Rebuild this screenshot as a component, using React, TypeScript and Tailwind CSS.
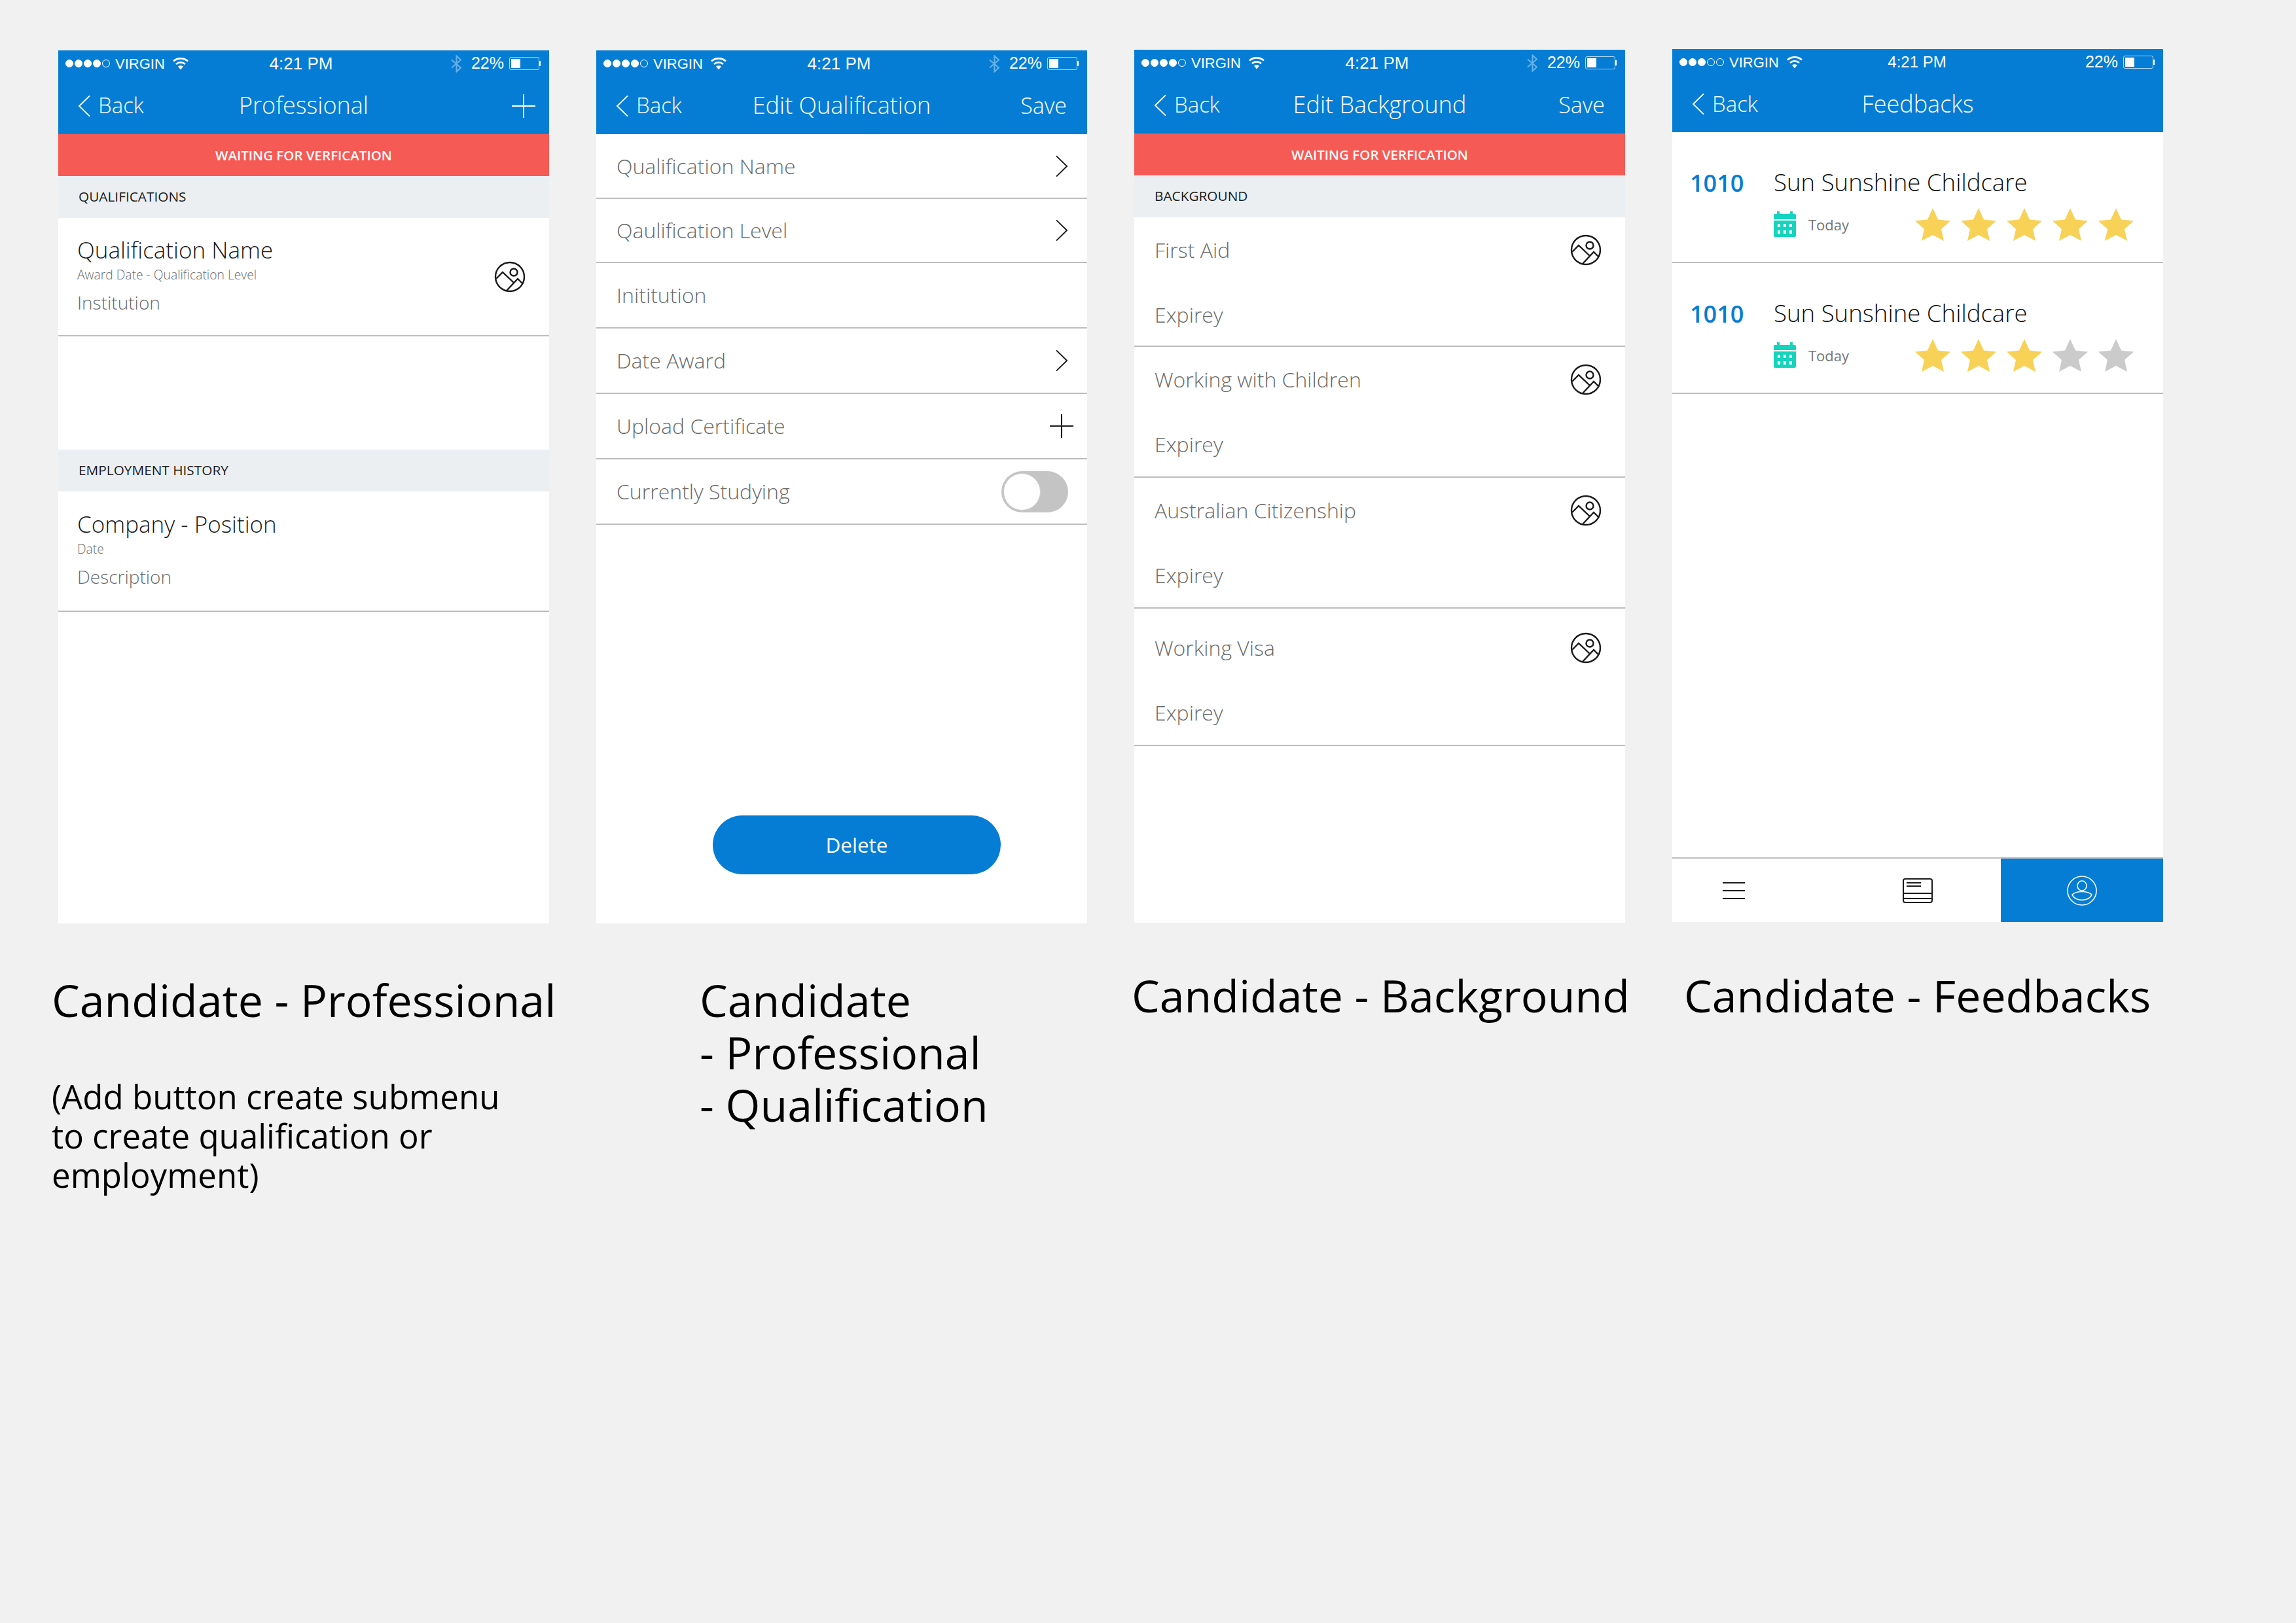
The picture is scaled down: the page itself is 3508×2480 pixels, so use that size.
import type { ReactNode } from "react";

const sans = "font-['Open_Sans',sans-serif]";

function Dots({ filled }: { filled: number }) {
  return (
    <div className="flex gap-[2px]">
      {[0, 1, 2, 3, 4].map((i) => (
        <span
          key={i}
          className={i < filled ? "h-[12px] w-[12px] rounded-full border border-white bg-white" : "h-[12px] w-[12px] rounded-full border border-white"}
        />
      ))}
    </div>
  );
}

function Wifi() {
  return (
    <svg width="24" height="20" viewBox="0 0 24 20" fill="none" stroke="white" strokeWidth="2.6">
      <path d="M1 6.5C7 1 17 1 23 6.5" />
      <path d="M5 11C9 7.5 15 7.5 19 11" />
      <path d="M12 19.5L8 14.5C10.5 12.8 13.5 12.8 16 14.5Z" fill="white" stroke="none" />
    </svg>
  );
}

function Bluetooth() {
  return (
    <svg width="17" height="27" viewBox="0 0 17 27" fill="none" stroke="white" strokeOpacity="0.4" strokeWidth="2">
      <path d="M1 7.5L15 19.5L8.5 25.5V1.5L15 7.5L1 19.5" />
    </svg>
  );
}

function Battery() {
  return (
    <div className="flex items-center">
      <div className="h-[20px] w-[46px] rounded-[3px] border border-white/70 p-[2px]">
        <div className="h-full w-[14px] bg-white" />
      </div>
      <div className="h-[8px] w-[2px] bg-white" />
    </div>
  );
}

function StatusBar({ filled = 4, bluetooth = true }: { filled?: number; bluetooth?: boolean }) {
  return (
    <div className="grid h-[40px] grid-cols-[1fr_auto_1fr] items-center pl-[11px] pr-[13px] font-['Liberation_Sans',sans-serif] text-[22px] text-white">
      <div className="flex items-center">
        <Dots filled={filled} />
        <span className="ml-[8px]">VIRGIN</span>
        <span className="ml-[12px] flex">
          <Wifi />
        </span>
      </div>
      <span className={bluetooth ? "-ml-[6px] text-[26px]" : "text-[24px]"}>4:21 PM</span>
      <div className="flex items-center justify-end">
        {bluetooth && <Bluetooth />}
        <span className="ml-[14px] mr-[8px] text-[25px]">22%</span>
        <Battery />
      </div>
    </div>
  );
}

function BackChevron() {
  return (
    <svg className="mt-[1px]" width="19" height="34" viewBox="0 0 20 36" fill="none" stroke="white" strokeWidth="2">
      <path d="M19 1.5L2 18L19 34.5" />
    </svg>
  );
}

function Plus({ color = "white" }: { color?: string }) {
  return (
    <svg width="36" height="36" viewBox="0 0 36 36" fill="none" stroke={color} strokeWidth="2">
      <path d="M18 0V36M0 18H36" />
    </svg>
  );
}

function NavBar({ title, right, short }: { title: string; right?: ReactNode; short?: boolean }) {
  return (
    <div className={`grid ${short ? "h-[87px]" : "h-[88px]"} grid-cols-[1fr_auto_1fr] items-center ${sans} font-light text-white`}>
      <div className="flex items-center gap-[12px] pl-[30px] text-[33px]">
        <BackChevron />
        <span>Back</span>
      </div>
      <span className="text-[36px]">{title}</span>
      <div className="flex justify-end">{right}</div>
    </div>
  );
}

function Header({ title, right, filled, bluetooth, short }: { title: string; right?: ReactNode; filled?: number; bluetooth?: boolean; short?: boolean }) {
  return (
    <div className="bg-[#067dd4]">
      <StatusBar filled={filled} bluetooth={bluetooth} />
      <NavBar title={title} right={right} short={short} />
    </div>
  );
}

function Banner() {
  return (
    <div className={`flex h-[64px] items-center justify-center bg-[#f65a54] ${sans} text-[20.5px] font-semibold text-white`}>
      WAITING FOR VERFICATION
    </div>
  );
}

function SectionLabel({ children }: { children: ReactNode }) {
  return (
    <div className={`flex h-[64px] items-center bg-[#ebeff2] pl-[31px] ${sans} text-[20.8px] font-medium text-[#1a1a1a]`}>
      {children}
    </div>
  );
}

function PhotoIcon() {
  return (
    <svg width="48" height="48" viewBox="0 0 48 48" fill="none" stroke="#1a1a1a" strokeWidth="2.4">
      <circle cx="24" cy="24" r="22" />
      <circle cx="30" cy="17" r="5.5" />
      <path d="M3 27L13 17L30 33" />
      <path d="M19 45L36 27L44 35" />
    </svg>
  );
}

function SummaryRow({ name, meta, detail, icon, rowClass, textClass }: { name: string; meta: string; detail: string; icon?: boolean; rowClass: string; textClass: string }) {
  return (
    <div className={`flex items-center justify-between border-b-2 border-[#bdbdbd] pl-[29px] pr-[36px] ${rowClass} ${sans}`}>
      <div className={`flex flex-col self-start ${textClass}`}>
        <span className="text-[35px] leading-[44px] font-light text-[#1a1a1a]">{name}</span>
        <span className="mt-[3px] text-[19.3px] leading-[26px] font-light text-[#6b6b6b]">{meta}</span>
        <span className="mt-[12px] text-[28px] leading-[34px] font-light text-[#6b6b6b]">{detail}</span>
      </div>
      {icon && <PhotoIcon />}
    </div>
  );
}

function Chevron() {
  return (
    <svg width="19" height="34" viewBox="0 0 20 36" fill="none" stroke="#1a1a1a" strokeWidth="2">
      <path d="M1 1.5L18 18L1 34.5" />
    </svg>
  );
}

function FormRow({ label, height = "h-[100px]", children }: { label: string; height?: string; children?: ReactNode }) {
  return (
    <div className={`flex items-center justify-between border-b-2 border-[#bdbdbd] pl-[31px] ${height} ${sans}`}>
      <span className="text-[32px] font-light text-[#6b6b6b]">{label}</span>
      {children}
    </div>
  );
}

function Toggle() {
  return (
    <div className="mr-[29px] flex h-[63px] w-[102px] items-center rounded-full bg-[#c4c4c4] p-[3px]">
      <div className="h-[57px] w-[57px] rounded-full border border-[#d0d0d0] bg-white" />
    </div>
  );
}

function DocRow({ label, rowClass }: { label: string; rowClass: string }) {
  return (
    <div className={`flex flex-col border-b-2 border-[#bdbdbd] pl-[31px] ${rowClass} ${sans} text-[32px] font-light text-[#6b6b6b]`}>
      <div className="flex h-[100px] shrink-0 items-center justify-between pr-[36px]">
        <span>{label}</span>
        <PhotoIcon />
      </div>
      <div className="flex h-[98px] shrink-0 items-center">Expirey</div>
    </div>
  );
}

function Star({ on }: { on: boolean }) {
  return (
    <svg width="54" height="50" viewBox="0 0 54 50" fill={on ? "#f8d157" : "#cbcbcb"}>
      <path d="M27 0L35 17.5L54 19.5L40 32L44 50L27 41L10 50L14 32L0 19.5L19 17.5Z" />
    </svg>
  );
}

function CalendarIcon() {
  return (
    <svg width="34" height="40" viewBox="0 0 34 40" fill="#15d4be">
      <rect x="5" y="0" width="4" height="8" />
      <rect x="25" y="0" width="4" height="8" />
      <path d="M2 4H32A2 2 0 0 1 34 6V12H0V6A2 2 0 0 1 2 4Z" />
      <path d="M0 14H34V37A2 2 0 0 1 32 39H2A2 2 0 0 1 0 37Z" />
      <g fill="white">
        <rect x="6" y="19" width="4" height="5" />
        <rect x="15" y="19" width="4" height="5" />
        <rect x="24" y="19" width="4" height="5" />
        <rect x="6" y="29" width="4" height="5" />
        <rect x="15" y="29" width="4" height="5" />
        <rect x="24" y="29" width="4" height="5" />
      </g>
    </svg>
  );
}

function FeedbackRow({ stars }: { stars: number }) {
  return (
    <div className={`flex h-[200px] border-b-2 border-[#bdbdbd] pl-[27px] ${sans}`}>
      <span className="mt-[54px] w-[128px] text-[36px] leading-[48px] font-semibold text-[#067dd4]">1010</span>
      <div className="flex w-[550px] flex-col pt-[54px]">
        <span className="text-[36.6px] leading-[44px] font-light text-[#111111]">Sun Sunshine Childcare</span>
        <div className="mt-[18px] flex items-center">
          <CalendarIcon />
          <span className="ml-[19px] w-[163px] text-[22px] text-[#757575]">Today</span>
          <div className="flex gap-[16px]">
            {[0, 1, 2, 3, 4].map((i) => (
              <Star key={i} on={i < stars} />
            ))}
          </div>
        </div>
      </div>
    </div>
  );
}

function TabBar() {
  return (
    <div className="flex h-[99px] border-t-2 border-[#bdbdbd]">
      <div className="flex w-[502px] items-center">
        <svg className="ml-[77px]" width="34" height="26" viewBox="0 0 34 26" fill="none" stroke="#1a1a1a" strokeWidth="2">
          <path d="M0 1H34M0 13H34M0 25H34" />
        </svg>
        <svg className="ml-[241px]" width="46" height="38" viewBox="0 0 46 38" fill="none" stroke="#1a1a1a" strokeWidth="2">
          <rect x="1" y="1" width="44" height="36" rx="3" />
          <path d="M1 23H45M1 31H45M6 7H28M6 12H28" />
        </svg>
      </div>
      <div className="flex w-[248px] items-center justify-center bg-[#067dd4]">
        <svg width="46" height="46" viewBox="0 0 46 46" fill="none" stroke="white" strokeWidth="1.6">
          <circle cx="23" cy="23" r="22" />
          <ellipse cx="23" cy="15.5" rx="7" ry="7.5" />
          <path d="M8 29C14 23 32 23 38 29C34 40 12 40 8 29Z" />
        </svg>
      </div>
    </div>
  );
}

function Phone({ children }: { children: ReactNode }) {
  return <div className="flex h-[1334px] w-[750px] flex-col bg-white">{children}</div>;
}

const caption = `whitespace-nowrap ${sans} text-[68px] leading-[80px] text-black`;

export default function App() {
  return (
    <div className="flex min-h-[2480px] w-[3508px] items-start gap-[72px] bg-[#f1f1f1] pl-[89px] pt-[77px]">
      <div className="w-[750px]">
        <Phone>
          <Header title="Professional" right={<div className="mr-[21px] mt-[2px] flex"><Plus /></div>} />
          <Banner />
          <SectionLabel>QUALIFICATIONS</SectionLabel>
          <SummaryRow name="Qualification Name" meta="Award Date - Qualification Level" detail="Institution" icon rowClass="h-[181px]" textClass="pt-[27px]" />
          <div className="h-[173px]" />
          <SectionLabel>EMPLOYMENT HISTORY</SectionLabel>
          <SummaryRow name="Company - Position" meta="Date" detail="Description" rowClass="h-[184px]" textClass="pt-[28px]" />
        </Phone>
        <div className={`${caption} -ml-[10px] mt-[77px]`}>Candidate - Professional</div>
        <div className={`-ml-[10px] mt-[77px] whitespace-nowrap ${sans} text-[51px] leading-[60px] text-black`}>
          (Add button create submenu
          <br />
          to create qualification or
          <br />
          employment)
        </div>
      </div>

      <div className="w-[750px]">
        <Phone>
          <Header title="Edit Qualification" right={<span className="mr-[31px] text-[34px]">Save</span>} />
          <FormRow label="Qualification Name" height="h-[99px]"><div className="mr-[29px] flex"><Chevron /></div></FormRow>
          <FormRow label="Qaulification Level" height="h-[98px]"><div className="mr-[29px] flex"><Chevron /></div></FormRow>
          <FormRow label="Inititution" />
          <FormRow label="Date Award"><div className="mr-[29px] flex"><Chevron /></div></FormRow>
          <FormRow label="Upload Certificate"><div className="mr-[21px] flex"><Plus color="#1a1a1a" /></div></FormRow>
          <FormRow label="Currently Studying"><Toggle /></FormRow>
          <button className={`ml-[178px] mt-[444px] h-[90px] w-[440px] rounded-full bg-[#067dd4] ${sans} text-[31.5px] text-white`}>Delete</button>
        </Phone>
        <div className={`${caption} ml-[158px] mt-[77px]`}>
          Candidate
          <br />- Professional
          <br />- Qualification
        </div>
      </div>

      <div className="-mt-[1px] w-[750px]">
        <Phone>
          <Header title="Edit Background" right={<span className="mr-[31px] text-[34px]">Save</span>} />
          <Banner />
          <SectionLabel>BACKGROUND</SectionLabel>
          <DocRow label="First Aid" rowClass="h-[198px]" />
          <DocRow label="Working with Children" rowClass="h-[200px]" />
          <DocRow label="Australian Citizenship" rowClass="h-[200px]" />
          <DocRow label="Working Visa" rowClass="h-[210px] pt-[10px]" />
        </Phone>
        <div className={`${caption} -ml-[4px] mt-[71px]`}>Candidate - Background</div>
      </div>

      <div className="-mt-[2px] w-[750px]">
        <Phone>
          <Header title="Feedbacks" filled={3} bluetooth={false} short />
          <FeedbackRow stars={5} />
          <FeedbackRow stars={3} />
          <div className="flex-1" />
          <TabBar />
        </Phone>
        <div className={`${caption} ml-[18px] mt-[72px]`}>Candidate - Feedbacks</div>
      </div>
    </div>
  );
}
